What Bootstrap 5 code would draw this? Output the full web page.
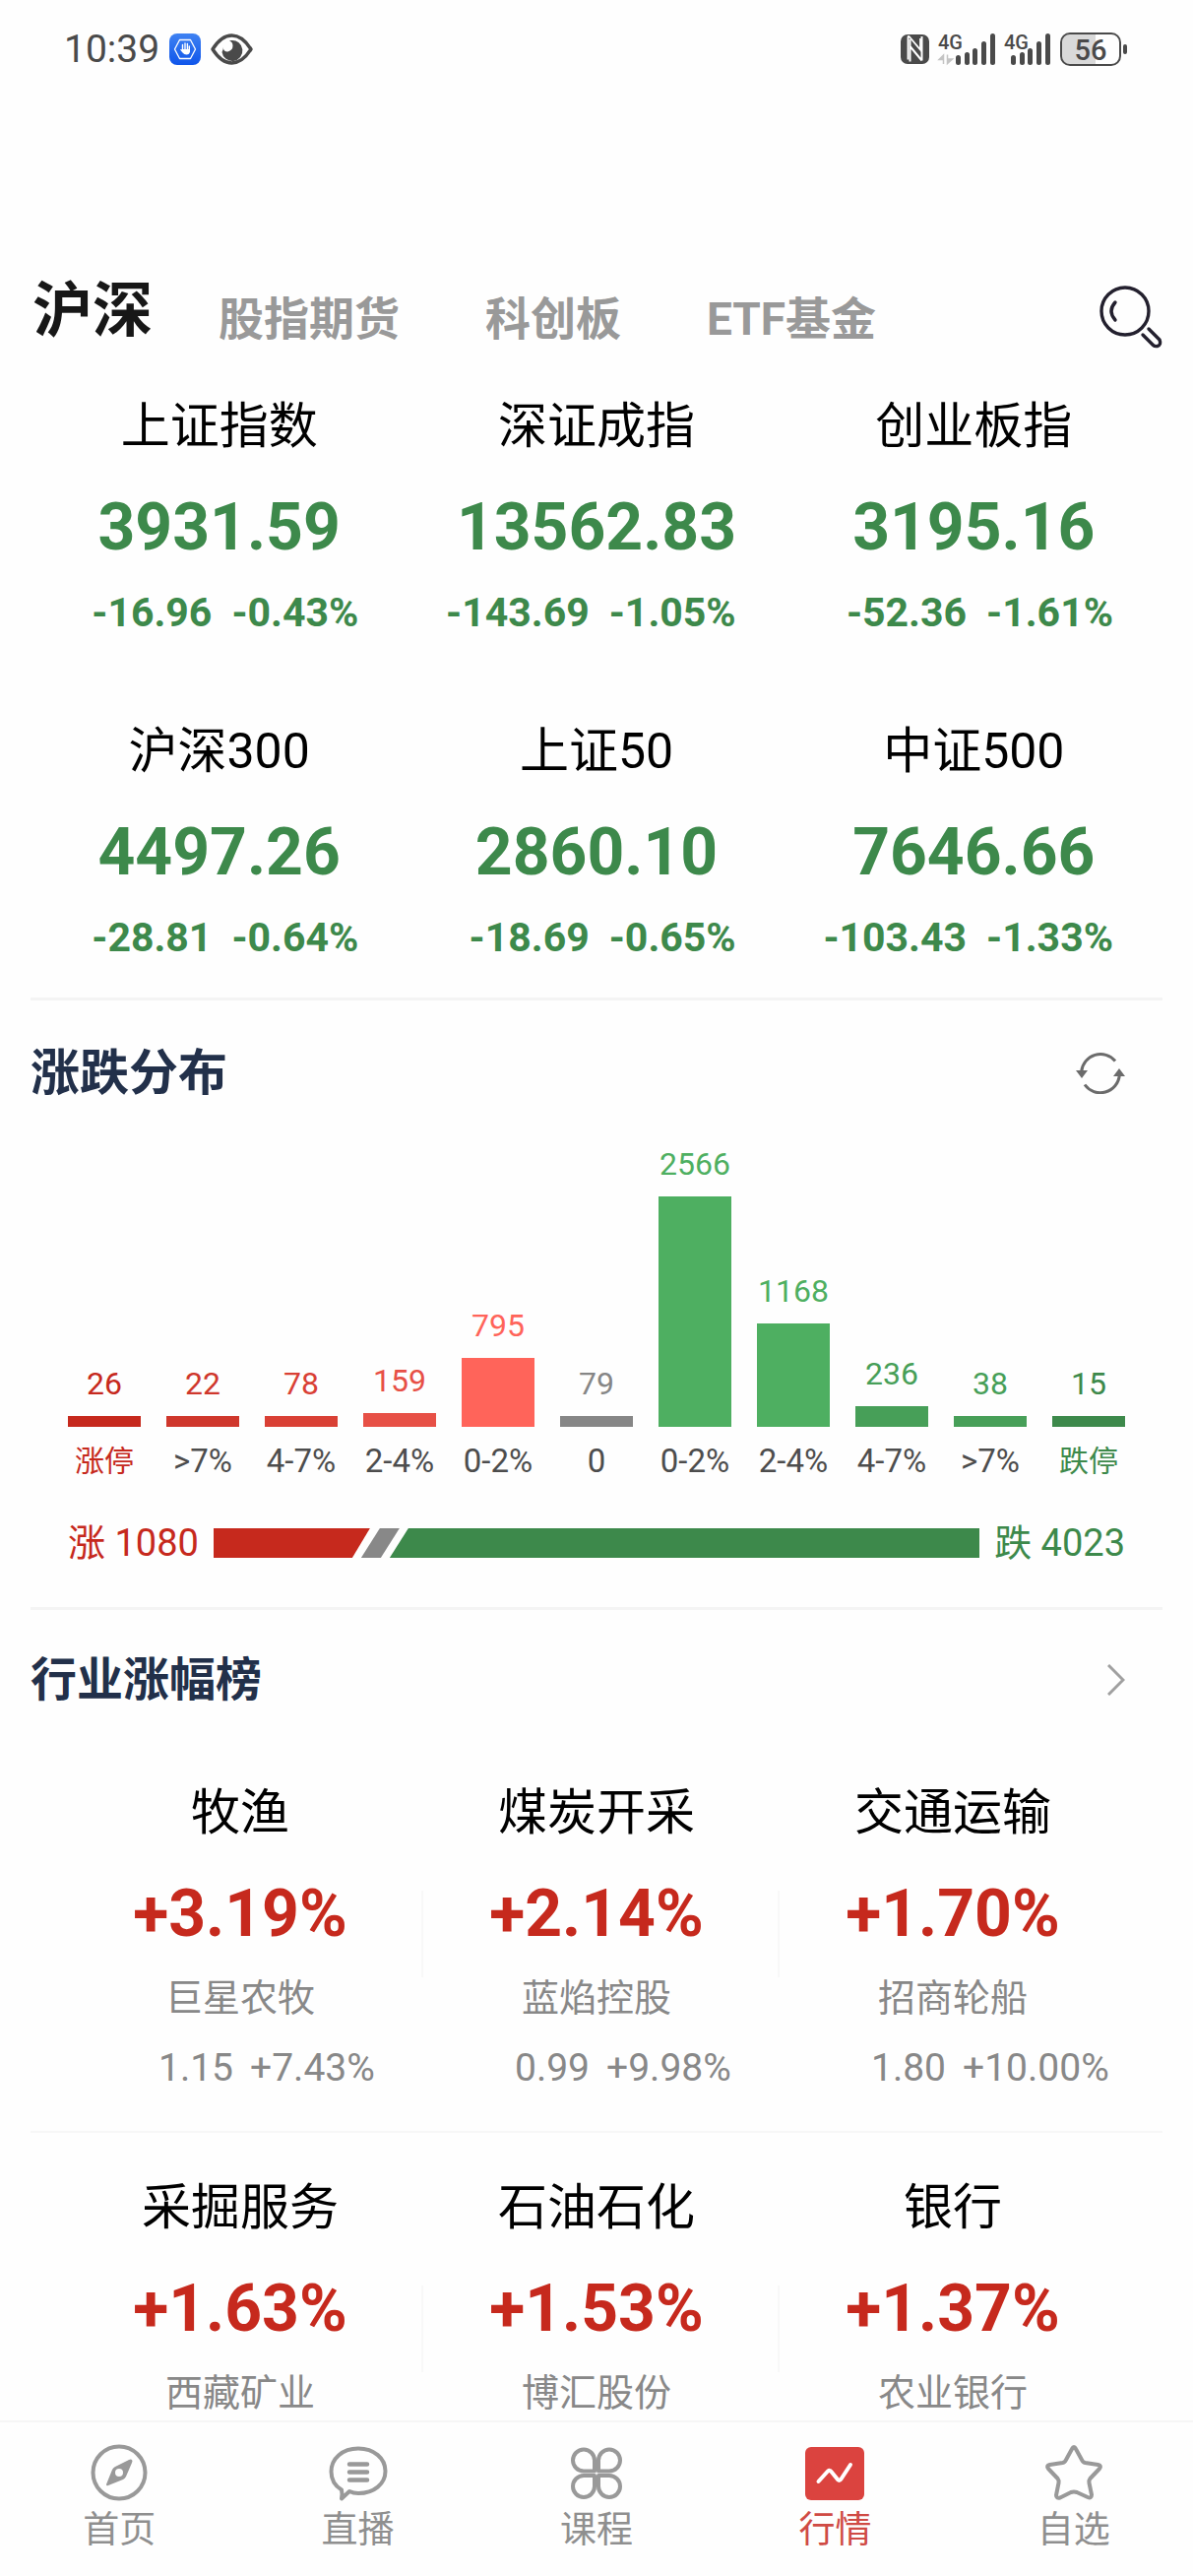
<!DOCTYPE html>
<html lang="zh-CN">
<head>
<meta charset="utf-8">
<meta name="viewport" content="width=device-width, initial-scale=1">
<title>行情</title>
<link href="https://cdn.jsdelivr.net/npm/bootstrap@5.3.0/dist/css/bootstrap.min.css" rel="stylesheet">
<style>
  body { font-family: Roboto, "Noto Sans CJK SC", sans-serif; background: #fefefe; color: #000; }
  a { color: inherit; text-decoration: none; }
  svg { display: block; flex: none; }
  .status-bar { height: 100px; padding: 0 67px 0 65px; color: #4a4a4a; }
  .status-apps { gap: 10px; }
  .clock { font-size: 39px; line-height: 48px; }
  .market-tabs { margin-top: 160px; height: 120px; padding: 0 31px 0 33px; }
  .market-tabs .nav { gap: 87px; }
  .market-tabs .nav-link { padding: 8px 0 0; font-size: 46px; line-height: 60px; font-weight: 700; color: #999; }
  .market-tabs .nav-link.active { padding: 0 0 8px; font-size: 61px; color: #171717; margin-right: -20px; }
  .icon-btn { background: none; border: 0; padding: 0; color: inherit; }
  .section-box { margin: 0 31px; border-bottom: 3px solid #f4f4f4; }
  .index-grid { padding: 18px 0 37px; row-gap: 82px; }
  .cell-name { font-size: 50px; line-height: 70px; }
  .cell-value { font-size: 66px; line-height: 72px; font-weight: 700; margin-top: 32px; }
  .cell-change { font-size: 41px; line-height: 48px; font-weight: 700; margin-top: 26px; padding-right: 50px; gap: 20px; }
  .fall { color: #3d894b; }
  .rise { color: #c6291d; }
  .section-title { font-size: 50px; line-height: 60px; font-weight: 700; color: #22304a; margin: 0; }
  .section-title.compact { font-size: 47px; line-height: 54px; }
  .section-head { padding: 44px 38px 0 0; color: #6b6b6b; }
  .dist-chart { padding: 0 38px; height: 384px; align-items: flex-end; }
  .dist-col { width: 74px; text-align: center; }
  .dist-num { font-size: 32px; line-height: 38px; margin-bottom: 14px; }
  .dist-label { font-size: 33px; line-height: 40px; margin-top: 15px; white-space: nowrap; display: flex; justify-content: center; color: #4d4d4d; }
  .dist-label.cjk { font-size: 30px; color: inherit; }
  .dist-bar { background: currentColor; }
  .breadth { padding: 35px 38px 37px; gap: 15px; font-size: 38px; line-height: 56px; }
  .breadth-track { height: 30px; }
  .breadth-track span { display: block; height: 30px; }
  .breadth-up { background: #c6291d; width: 159px; clip-path: polygon(0 0, 100% 0, calc(100% - 18px) 100%, 0 100%); }
  .breadth-flat { background: #888; width: 39px; margin-left: -9px; clip-path: polygon(19px 0, 100% 0, 20px 100%, 0 100%); }
  .breadth-down { background: #3d894b; margin-left: -10px; clip-path: polygon(19px 0, 100% 0, 100% 100%, 0 100%); }
  .industry-list { margin: 0 31px; padding-top: 32px; }
  .industry-row { padding: 0 32px; }
  .industry-row + .industry-row { border-top: 2px solid #f7f7f7; }
  .industry-cell { padding-bottom: 40px; }
  .industry-cell .cell-name { margin-top: 41px; }
  .industry-cell .stock-name { font-size: 38px; line-height: 50px; margin-top: 24px; color: #888; }
  .industry-cell .stock-move { font-size: 39px; line-height: 48px; margin-top: 22px; padding-left: 98px; gap: 17px; color: #888; }
  .industry-value { position: relative; }
  .industry-value.divided::after { content: ""; position: absolute; right: -5px; top: 12px; height: 88px; border-right: 2px solid #f8f8f8; }
  .tab-bar { height: 158px; border-top: 2px solid #f6f6f6; background: #fefefe; color: #8f8f8f; padding-top: 21px; }
  .tab-bar a { font-size: 37px; line-height: 48px; }
  .tab-bar svg { margin: 0 auto 5px; }
  .tab-bar a.active { color: #cf4a44; }
</style>
</head>
<body>
<div class="d-flex flex-column min-vh-100">
  <header>
    <div class="status-bar d-flex align-items-center justify-content-between">
      <div class="status-apps d-flex align-items-center">
        <span class="clock">10:39</span>
        <svg width="32" height="32" viewBox="0 0 32 32">
          <defs><linearGradient id="appBlue" x1="0" y1="0" x2="0" y2="1"><stop offset="0" stop-color="#3f82f2"/><stop offset="1" stop-color="#0f55ea"/></linearGradient></defs>
          <rect width="32" height="32" rx="8" fill="url(#appBlue)"/>
          <path d="M10.500 6.500h11l5 9.500-5 9.500h-11L5.500 16z" fill="none" stroke="#fff" stroke-width="1.300" stroke-linejoin="round"/>
          <path d="M13.500 17v-5.500M16 16v-6M18.400 16v-5.500M20.300 18v-5" stroke="#fff" stroke-width="1.400" stroke-linecap="round"/>
          <path d="M12.800 16h8.200v2.500q-.5 3-3.500 3-2.500 0-4-2l-2.500-3q1-1 1.800 0z" fill="#fff"/>
        </svg>
        <svg width="43" height="32" viewBox="0 0 43 32">
          <path d="M2 16C8 6.500 14 2 21.500 2S35 6.500 41 16c-6 9.500-12 14-19.500 14S8 25.500 2 16z" fill="none" stroke="#4a4a4a" stroke-width="3.400" stroke-linejoin="round"/>
          <path d="M21 7a10.500 10.500 0 1 1-9.500 12q2-3 1-5 1 5 5 4.500 5-1.500 5-6 0-4-3.500-5z" fill="#4a4a4a"/>
        </svg>
      </div>
      <svg width="230" height="46" viewBox="0 -6 230 46" fill="#4a4a4a" font-family="Roboto, sans-serif">
        <rect y="2" width="29" height="30" rx="7"/>
        <path d="M7.500 27.500V5q0-2 1.500-.500l11 13V6" fill="none" stroke="#fff" stroke-width="1.800"/>
        <path d="M9.500 7v22.500M21.500 28.500V4M9.500 14l12 14.500" fill="none" stroke="#fff" stroke-width="2"/>
        <text x="38" y="17" font-size="20" font-weight="500">4G</text>
        <text x="105" y="17" font-size="20" font-weight="500">4G</text>
        <path d="M43.500 32V23l-4.500 4.500h4.500M47.500 22.500v9l5-4.500h-5" fill="#c4c4c4" stroke="#c4c4c4" stroke-width="1.500"/>
        <g><rect x="56" y="23" width="5" height="10" rx="2.500"/><rect x="65" y="20" width="5" height="13" rx="2.500"/><rect x="73" y="16" width="5" height="17" rx="2.500"/><rect x="82" y="9" width="5" height="24" rx="2.500"/><rect x="91" y="1" width="5" height="32" rx="2.500"/></g>
        <g transform="translate(56 0)"><rect x="56" y="23" width="5" height="10" rx="2.500"/><rect x="65" y="20" width="5" height="13" rx="2.500"/><rect x="73" y="16" width="5" height="17" rx="2.500"/><rect x="82" y="9" width="5" height="24" rx="2.500"/><rect x="91" y="1" width="5" height="32" rx="2.500"/></g>
        <path d="M198 2h-25q-9 0-9 9v12q0 9 9 9h25z" fill="#d9d9d9"/>
        <rect x="163" y="1" width="60" height="32" rx="9" fill="none" stroke="#4a4a4a" stroke-width="2"/>
        <rect x="226" y="12" width="4" height="10" rx="2"/>
        <text x="193" y="28" font-size="29" font-weight="500" text-anchor="middle">56</text>
      </svg>
    </div>
    <div class="market-tabs d-flex align-items-center justify-content-between">
      <nav class="nav align-items-center">
        <a class="nav-link active" href="#">沪深</a>
        <a class="nav-link" href="#">股指期货</a>
        <a class="nav-link" href="#">科创板</a>
        <a class="nav-link" href="#">ETF基金</a>
      </nav>
      <button class="icon-btn mt-1" type="button" aria-label="搜索">
        <svg width="64" height="64" viewBox="0 0 64 64" fill="none" stroke="#23202e" stroke-width="3.400" stroke-linecap="round">
          <circle cx="26" cy="26" r="24"/><path d="M16 17q-8 9 0 18M50 44l11 11q2 5-2 6.500-3 .5-4.500-1L44 50"/>
        </svg>
      </button>
    </div>
  </header>

  <main>
    <section class="section-box">
      <div class="row g-0 index-grid text-center">
        <div class="col-4"><div class="cell-name">上证指数</div><div class="cell-value fall">3931.59</div><div class="cell-change fall d-flex justify-content-end"><span>-16.96</span><span>-0.43%</span></div></div>
        <div class="col-4"><div class="cell-name">深证成指</div><div class="cell-value fall">13562.83</div><div class="cell-change fall d-flex justify-content-end"><span>-143.69</span><span>-1.05%</span></div></div>
        <div class="col-4"><div class="cell-name">创业板指</div><div class="cell-value fall">3195.16</div><div class="cell-change fall d-flex justify-content-end"><span>-52.36</span><span>-1.61%</span></div></div>
        <div class="col-4"><div class="cell-name">沪深300</div><div class="cell-value fall">4497.26</div><div class="cell-change fall d-flex justify-content-end"><span>-28.81</span><span>-0.64%</span></div></div>
        <div class="col-4"><div class="cell-name">上证50</div><div class="cell-value fall">2860.10</div><div class="cell-change fall d-flex justify-content-end"><span>-18.69</span><span>-0.65%</span></div></div>
        <div class="col-4"><div class="cell-name">中证500</div><div class="cell-value fall">7646.66</div><div class="cell-change fall d-flex justify-content-end"><span>-103.43</span><span>-1.33%</span></div></div>
      </div>
    </section>

    <section class="section-box">
      <div class="section-head d-flex align-items-center justify-content-between">
        <h2 class="section-title">涨跌分布</h2>
        <button class="icon-btn" type="button" aria-label="刷新">
          <svg width="50" height="42" viewBox="0 0 50 42" fill="none" stroke="currentColor" stroke-width="3">
            <path d="M40 8.500A19.500 19.500 0 0 0 5.700 19M9 32.500A19.500 19.500 0 0 0 44.300 23"/>
            <path d="M0 18h12l-6 8zM38 24h12l-6-8z" fill="currentColor" stroke="none"/>
          </svg>
        </button>
      </div>
      <div class="dist-chart d-flex justify-content-between">
        <div class="dist-col" style="color:#c6291d"><div class="dist-num">26</div><div class="dist-bar" style="height:11px"></div><div class="dist-label cjk">涨停</div></div>
        <div class="dist-col" style="color:#cf372c"><div class="dist-num">22</div><div class="dist-bar" style="height:11px"></div><div class="dist-label">&gt;7%</div></div>
        <div class="dist-col" style="color:#d94035"><div class="dist-num">78</div><div class="dist-bar" style="height:11px"></div><div class="dist-label">4-7%</div></div>
        <div class="dist-col" style="color:#e75046"><div class="dist-num">159</div><div class="dist-bar" style="height:14px"></div><div class="dist-label">2-4%</div></div>
        <div class="dist-col" style="color:#ff645a"><div class="dist-num">795</div><div class="dist-bar" style="height:70px"></div><div class="dist-label">0-2%</div></div>
        <div class="dist-col" style="color:#868686"><div class="dist-num">79</div><div class="dist-bar" style="height:11px"></div><div class="dist-label">0</div></div>
        <div class="dist-col" style="color:#4eaf61"><div class="dist-num">2566</div><div class="dist-bar" style="height:234px"></div><div class="dist-label">0-2%</div></div>
        <div class="dist-col" style="color:#4eaf61"><div class="dist-num">1168</div><div class="dist-bar" style="height:105px"></div><div class="dist-label">2-4%</div></div>
        <div class="dist-col" style="color:#479f58"><div class="dist-num">236</div><div class="dist-bar" style="height:21px"></div><div class="dist-label">4-7%</div></div>
        <div class="dist-col" style="color:#479f58"><div class="dist-num">38</div><div class="dist-bar" style="height:11px"></div><div class="dist-label">&gt;7%</div></div>
        <div class="dist-col" style="color:#3d894b"><div class="dist-num">15</div><div class="dist-bar" style="height:11px"></div><div class="dist-label cjk">跌停</div></div>
      </div>
      <div class="breadth d-flex align-items-center">
        <span class="rise">涨 1080</span>
        <div class="breadth-track d-flex flex-grow-1"><span class="breadth-up"></span><span class="breadth-flat"></span><span class="breadth-down flex-grow-1"></span></div>
        <span class="fall">跌 4023</span>
      </div>
    </section>

    <section>
      <div class="section-head d-flex align-items-center justify-content-between mx-auto" style="width:calc(100% - 62px)">
        <h2 class="section-title compact">行业涨幅榜</h2>
        <a href="#" aria-label="更多"><svg width="18" height="32" viewBox="0 0 18 32" fill="none" stroke="#a0a0a0" stroke-width="3"><path d="M1 1l15 15L1 31"/></svg></a>
      </div>
      <div class="industry-list">
        <div class="row g-0 industry-row text-center">
          <div class="col-4 industry-cell"><div class="cell-name">牧渔</div><div class="cell-value rise industry-value divided">+3.19%</div><div class="stock-name">巨星农牧</div><div class="stock-move d-flex"><span>1.15</span><span>+7.43%</span></div></div>
          <div class="col-4 industry-cell"><div class="cell-name">煤炭开采</div><div class="cell-value rise industry-value divided">+2.14%</div><div class="stock-name">蓝焰控股</div><div class="stock-move d-flex"><span>0.99</span><span>+9.98%</span></div></div>
          <div class="col-4 industry-cell"><div class="cell-name">交通运输</div><div class="cell-value rise industry-value">+1.70%</div><div class="stock-name">招商轮船</div><div class="stock-move d-flex"><span>1.80</span><span>+10.00%</span></div></div>
        </div>
        <div class="row g-0 industry-row text-center">
          <div class="col-4 industry-cell pb-0"><div class="cell-name">采掘服务</div><div class="cell-value rise industry-value divided">+1.63%</div><div class="stock-name">西藏矿业</div></div>
          <div class="col-4 industry-cell pb-0"><div class="cell-name">石油石化</div><div class="cell-value rise industry-value divided">+1.53%</div><div class="stock-name">博汇股份</div></div>
          <div class="col-4 industry-cell pb-0"><div class="cell-name">银行</div><div class="cell-value rise industry-value">+1.37%</div><div class="stock-name">农业银行</div></div>
        </div>
      </div>
    </section>
  </main>

  <nav class="tab-bar d-flex text-center mt-auto">
    <a class="flex-fill w-100" href="#">
      <svg width="60" height="60" viewBox="0 0 60 60"><circle cx="30" cy="30" r="26.500" fill="none" stroke="#999" stroke-width="4"/><path fill="#999" fill-rule="evenodd" d="M43 17q1 1 0 3l-6 14q-1 2-3 3L19 43q-2 1-2-1l6-15q1-2 3-3l14-7q2-1 3 0zM30 26a4 4 0 1 0 0 8 4 4 0 0 0 0-8z"/></svg>首页</a>
    <a class="flex-fill w-100" href="#">
      <svg width="60" height="60" viewBox="0 0 60 60" fill="none" stroke="#999" stroke-linecap="round" stroke-linejoin="round"><path stroke-width="4" d="M13 47.500C5.500 43 2.500 36 2.500 29 2.500 15.500 14 5.500 30 5.500S57.500 15.500 57.500 28.500 46 51 30 51q-5 0-9-2l-8 7.500q1-5 0-9z"/><path stroke-width="4.500" d="M21 21.500h18M21 29.500h18M21 37.500h18"/></svg>直播</a>
    <a class="flex-fill w-100" href="#">
      <svg width="60" height="60" viewBox="0 0 60 60" fill="none" stroke="#999" stroke-width="4" stroke-linejoin="round"><path d="M28 28.500H17a11 11 0 1 1 11-11zM32 28.500h11a11 11 0 1 0-11-11zM28 33H17a11 11 0 1 0 11 11zM32 33h11a11 11 0 1 1-11 11z"/></svg>课程</a>
    <a class="flex-fill w-100 active" href="#">
      <svg width="60" height="60" viewBox="0 0 60 60"><rect y="4" width="60" height="54" rx="6" fill="#db433f"/><path d="M13.500 39l9.500-10.500q2-1.500 3.500.5l6.500 8q2 2 3.500-.5L46 22" fill="none" stroke="#fff" stroke-width="4" stroke-linecap="round" stroke-linejoin="round"/></svg>行情</a>
    <a class="flex-fill w-100" href="#">
      <svg width="60" height="60" viewBox="0 0 60 60" fill="none" stroke="#999" stroke-width="4" stroke-linejoin="round"><path d="M28 6q2-4 4 0l6 11q1 2.500 3.500 3l13 2q4 1 1.500 4L46.500 36q-1.500 2-1 4.500l2.500 12q0 4-4 2.500L33 50q-3-1-6 0l-11 5.500q-4 1-4-2.500l2.500-12.500q.5-2.500-1-4.500L4 26q-2.500-3 1.500-4l13-2q2.500-.5 3.500-3z"/></svg>自选</a>
  </nav>
</div>
<script src="https://cdn.jsdelivr.net/npm/bootstrap@5.3.0/dist/js/bootstrap.bundle.min.js"></script>
</body>
</html>
